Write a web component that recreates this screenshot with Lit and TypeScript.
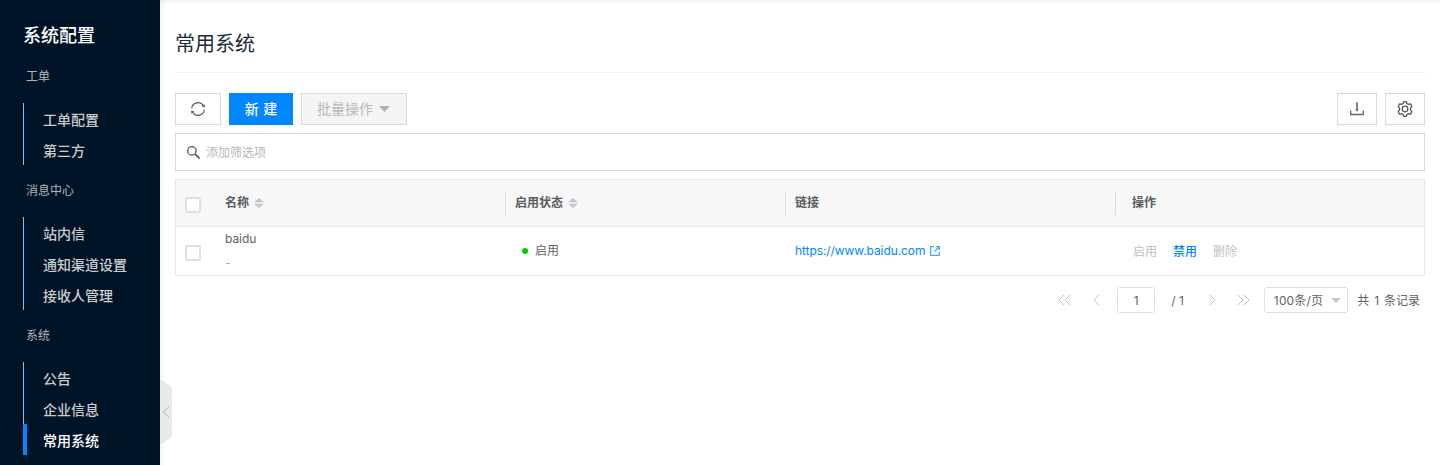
import { LitElement, html, css, svg } from "lit";
import { customElement } from "lit/decorators.js";
import { classMap } from "lit/directives/class-map.js";

const groups = [
  { label: "工单", items: ["工单配置", "第三方"] },
  { label: "消息中心", items: ["站内信", "通知渠道设置", "接收人管理"] },
  { label: "系统", items: ["公告", "企业信息", "常用系统"] },
];
const current = "常用系统";

const chevron = (points: string[], w: number) => html`
  <svg width=${w} height="12" viewBox="0 0 ${w} 12" fill="none" stroke="currentColor" stroke-width="1">
    ${points.map((p) => svg`<polyline points=${p} />`)}
  </svg>`;

@customElement("side-nav")
class SideNav extends LitElement {
  static styles = css`
    :host { display: block; background: #001428; color: #fff; height: 465px; overflow: hidden; }
    .title { padding: 20px 0 0 23px; font-size: 18px; line-height: 32px; font-weight: 500; }
    .label { padding-left: 26px; font-size: 12px; line-height: 52px; height: 52px; color: #b0b6bd; }
    .title + .label { height: 51px; line-height: 50px; }
    .list { margin-left: 23px; border-left: 1px solid #7cc4f8; }
    .item { height: 31px; line-height: 34px; padding-left: 19px; font-size: 14px; font-weight: 500; color: #ccc; }
    .item.on { color: #fff; border-left: 4px solid #0086ff; margin-left: -1px; padding-left: 16px; }
  `;
  render() {
    return html`
      <div class="title">系统配置</div>
      ${groups.map((g) => html`
        <div class="label">${g.label}</div>
        <div class="list">
          ${g.items.map((i) => html`<div class=${classMap({ item: true, on: i === current })}>${i}</div>`)}
        </div>`)}
    `;
  }
}

@customElement("tool-bar")
class ToolBar extends LitElement {
  static styles = css`
    :host { display: flex; gap: 8px; }
    .btn { box-sizing: border-box; height: 32px; border: 1px solid #d9d9d9; background: #fff; color: #555;
      display: flex; align-items: center; justify-content: center; font-size: 14px; box-shadow: 0 2px 0 rgba(0,0,0,.02); }
    .refresh { width: 46px; }
    .create { width: 64px; background: #0086ff; border-color: #0086ff; color: #fff; font-weight: 500; word-spacing: 1px; padding-bottom: 2px; }
    .batch { width: 106px; background: #f5f5f5; color: #b8b8b8; gap: 6px; box-shadow: none; padding-right: 1px; }
    .batch span { padding-bottom: 2px; }
    .square { width: 40px; }
    .space { flex: 1; }
    svg { display: block; }
  `;
  render() {
    return html`
      <div class="btn refresh">
        <svg width="14" height="14" viewBox="0 0 14 14" fill="none" stroke="#555" stroke-width="1.15">
          <path d="M.7 6.3A6.300 6.300 0 0 1 12.500 4M13.300 7.700A6.300 6.300 0 0 1 1.500 10" />
          <path d="M13.700 2.300v3.200l-3-.9zM.3 11.700V8.500l3 .9z" fill="#555" stroke="none" />
        </svg>
      </div>
      <div class="btn create">新 建</div>
      <div class="btn batch"><span>批量操作</span>
        <svg width="11" height="6" viewBox="0 0 11 6"><path d="M0 0h11L5.5 6z" fill="#b0b0b0" /></svg>
      </div>
      <div class="space"></div>
      <div class="btn square">
        <svg width="14" height="14" viewBox="0 0 14 14" fill="none" stroke="#666" stroke-width="1.3">
          <path d="M.7 8.500v4h12.600v-4" /><path d="M7 .3v8" stroke-width="1.600" /><path d="M5.200 7.400h3.600L7 9.600z" fill="#666" stroke="none" />
        </svg>
      </div>
      <div class="btn square">
        <svg width="16" height="16" viewBox="0 0 16 16" fill="none" stroke="#555" stroke-width="1.25" stroke-linejoin="round">
          <path d="M6.600.7h2.800l.5 1.800 1.500.9 2-.5 1.400 2.400L13.500 6.900v2.200l1.300 1.600-1.400 2.400-2-.5-1.500.9-.5 1.800H6.600l-.5-1.800-1.500-.9-2 .5-1.400-2.400L2.500 9.100V6.900L1.200 5.300l1.400-2.400 2 .5 1.500-.9z" />
          <circle cx="8" cy="8" r="2.800" />
        </svg>
      </div>
    `;
  }
}

@customElement("system-table")
class SystemTable extends LitElement {
  static styles = css`
    :host { display: block; border: 1px solid #e8e8e8; font-size: 12px; color: #606266; }
    .row { display: grid; grid-template-columns: 39px 290px 280px 330px 1fr; height: 48px; align-items: center; }
    .head { background: #f7f7f7; border-bottom: 1px solid #e8e8e8; height: 46px; font-weight: 700; color: #5a5c60; }
    .cell { padding: 0 0 2px 10px; display: flex; align-items: center; }
    .head .cell { height: 24px; line-height: 24px; gap: 5px; box-sizing: border-box; padding-bottom: 0; }
    .head .div { border-left: 1px solid #dcdcdc; padding-left: 9px; }
    .head .op { padding-left: 16px; }
    .box { width: 12px; height: 12px; border: 2px solid #dcdfe6; border-radius: 2px; background: #fff; margin: 4px 0 0 9px; }
    .name { padding-left: 10px; line-height: 24px; }
    .name div:first-child { letter-spacing: -.05px; }
    .sub { color: #aaa; }
    .dot { width: 6px; height: 6px; border-radius: 50%; background: #0c0; margin: 4px 7px 0 7px; }
    .row .state { padding-bottom: 4px; }
    .link { color: #0086ff; gap: 5px; letter-spacing: -.08px; }
    .link svg { margin-top: 2px; }
    .row .acts { padding: 0 0 2px 18px; gap: 16px; color: #c0c0c0; }
    .acts .live { color: #0086ff; font-weight: 500; }
    svg { display: block; }
  `;
  sorter() {
    return html`<svg width="10" height="10" viewBox="0 0 10 10" fill="#c0c4cc"><path d="M5 0l5 4.300H0zM0 5.700h10L5 10z" /></svg>`;
  }
  render() {
    return html`
      <div class="row head">
        <div class="box"></div>
        <div class="cell">名称${this.sorter()}</div>
        <div class="cell div">启用状态${this.sorter()}</div>
        <div class="cell div">链接</div>
        <div class="cell div op">操作</div>
      </div>
      <div class="row">
        <div class="box"></div>
        <div class="name"><div>baidu</div><div class="sub">-</div></div>
        <div class="cell state"><span class="dot"></span>启用</div>
        <div class="cell link">https://www.baidu.com
          <svg width="10" height="10" viewBox="0 0 10 10" fill="none" stroke="#4aa8ff" stroke-width="1.300">
            <path d="M4 .6H.6v8.800h8.800V6M6 .6h3.400V4M9.200.8L4.500 5.500" />
          </svg>
        </div>
        <div class="cell acts"><span>启用</span><span class="live">禁用</span><span>删除</span></div>
      </div>
    `;
  }
}

@customElement("page-bar")
class PageBar extends LitElement {
  static styles = css`
    :host { display: flex; justify-content: flex-end; align-items: center; height: 26px; font-size: 12px; color: #606266; padding-right: 5px; }
    .nav { color: #c0c4cc; display: flex; }
    .prev { margin: 0 17px 0 22px; }
    .next { margin: 0 21px 0 25px; }
    .page { box-sizing: border-box; width: 38px; height: 26px; border: 1px solid #dcdfe6; border-radius: 3px; text-align: center; line-height: 25px; }
    .total { margin-left: 16px; }
    .size { box-sizing: border-box; width: 84px; height: 26px; border: 1px solid #dcdfe6; border-radius: 3px; margin: 0 9.500px 0 14px;
      padding: 0 6px 0 9px; display: flex; align-items: center; justify-content: space-between; }
    .size span, .count { padding-bottom: 2px; }
    .size span { letter-spacing: .15px; }
    .count { word-spacing: 1.5px; }
  `;
  render() {
    return html`
      <span class="nav">${chevron(["6,1 1,6 6,11", "12,1 7,6 12,11"], 13)}</span>
      <span class="nav prev">${chevron(["6,1 1,6 6,11"], 7)}</span>
      <div class="page">1</div>
      <span class="total">/ 1</span>
      <span class="nav next">${chevron(["1,1 6,6 1,11"], 7)}</span>
      <span class="nav">${chevron(["1,1 6,6 1,11", "7,1 12,6 7,11"], 13)}</span>
      <div class="size"><span>100条/页</span>
        <svg width="10" height="5" viewBox="0 0 10 5"><path d="M0 0h10L5 5z" fill="#c0c4cc" /></svg>
      </div>
      <span class="count">共 1 条记录</span>
    `;
  }
}

@customElement("app-root")
class AppRoot extends LitElement {
  static styles = css`
    :host { display: grid; grid-template-columns: 160px 1fr; height: 465px; position: relative; overflow: hidden; background: #fff;
      font-family: Inter, "Noto Sans CJK SC", sans-serif; }
    .main { padding: 0 15px; background: linear-gradient(to right, #eff5f9, #fff 6px); }
    .heading { height: 72px; line-height: 88px; font-size: 20px; color: #1b2a3c; border-bottom: 1px solid #f0f0f0; box-sizing: content-box; }
    tool-bar { margin-top: 20px; }
    .search { box-sizing: border-box; height: 38px; margin: 8px 0; border: 1px solid #d9d9d9; background: #fff; display: flex; align-items: center;
      gap: 6px; padding-left: 11px; font-size: 12px; color: #b8b8b8; }
    .search span { padding-bottom: 1px; }
    page-bar { margin-top: 11px; }
    .shade { position: absolute; top: 0; left: 0; right: 0; height: 4px; background: linear-gradient(rgba(0,0,0,.05), transparent); }
    .handle { position: absolute; left: 160px; top: 379px; }
  `;
  render() {
    return html`
      <side-nav></side-nav>
      <div class="main">
        <div class="heading">常用系统</div>
        <tool-bar></tool-bar>
        <div class="search">
          <svg width="13" height="13" viewBox="0 0 13 13" fill="none" stroke="#555" stroke-width="1.300">
            <circle cx="4.900" cy="4.900" r="4.200" /><path d="M7.900 7.900l4.600 4.600" stroke-width="1.600" />
          </svg>
          <span>添加筛选项</span>
        </div>
        <system-table></system-table>
        <page-bar></page-bar>
      </div>
      <div class="shade"></div>
      <svg class="handle" width="12" height="66" viewBox="0 0 12 66">
        <path d="M0 0l12 8v50L0 66z" fill="#e9e9e9" /><path d="M9 28l-6 5 6 5" fill="none" stroke="#bbb" />
      </svg>
    `;
  }
}
